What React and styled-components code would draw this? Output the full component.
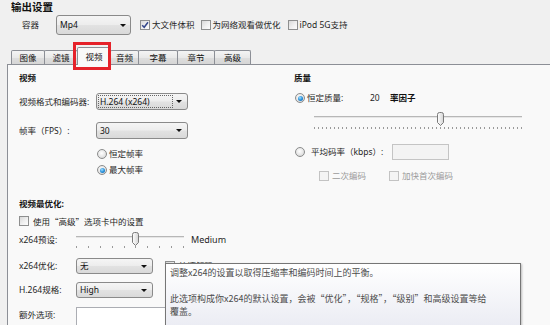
import React from "react";
import styled, { createGlobalStyle } from "styled-components";

const Global = createGlobalStyle`
  html, body { margin: 0; padding: 0; }
  body {
    background: #f0f0f0;
    font-family: "Noto Sans", "Noto Sans CJK SC", sans-serif;
    font-size: 8.5px;
    line-height: 12px;
    color: #1f1f1f;
  }
  * { box-sizing: border-box; }
`;

const Window = styled.div`
  position: relative;
  width: 550px;
  height: 325px;
  overflow: hidden;
  display: flex;
  flex-direction: column;
  background: #f0f0f0;
`;

const Title = styled.div`
  height: 13px;
  padding: 1px 0 0 11px;
  font-size: 10.5px;
  font-weight: 700;
  line-height: 12px;
  color: #111;
`;

const TopRow = styled.div`
  margin-top: 2px;
  height: 20px;
  padding-left: 22px;
  display: flex;
  align-items: center;
`;

const TopLabel = styled.span`
  width: 34px;
  flex: none;
`;

const CheckGroup = styled.div`
  display: flex;
  align-items: center;
  gap: 6px;
  margin-left: ${(p) => p.$ml || 0}px;
`;

const CheckItem = styled.label`
  display: inline-flex;
  align-items: center;
  gap: ${(p) => p.$gap ?? 2}px;
  margin-left: ${(p) => p.$ml || 0}px;
  color: ${(p) => (p.$disabled ? "#9b9b9b" : "inherit")};
  white-space: nowrap;
`;

const CjkText = styled.span`
  font-family: "Noto Sans CJK SC", sans-serif;
`;

const Box = styled.span`
  width: 10px;
  height: 10px;
  flex: none;
  border: 1px solid ${(p) => (p.$disabled ? "#c3c3c3" : "#8e8f8f")};
  background: ${(p) =>
    p.$disabled
      ? "#f4f4f4"
      : "linear-gradient(135deg, #d9d9d9 0%, #f0f0f0 55%, #fdfdfd 100%)"};
  display: inline-flex;
  align-items: center;
  justify-content: center;
`;

const RadioCircle = styled.span`
  width: 10px;
  height: 10px;
  flex: none;
  border-radius: 50%;
  border: 1px solid #8b8c8c;
  background: radial-gradient(circle at 45% 40%, #ffffff 0%, #e6e6e6 55%, #c9c9c9 100%);
  display: inline-flex;
  align-items: center;
  justify-content: center;
  margin-left: ${(p) => p.$ml || 0}px;
  &::after {
    content: "";
    display: ${(p) => (p.$on ? "block" : "none")};
    width: 5px;
    height: 5px;
    border-radius: 50%;
    background: radial-gradient(circle at 40% 35%, #a6e0ff 0%, #2b93dc 50%, #0d5ea8 100%);
  }
`;

const SelectBox = styled.div`
  width: ${(p) => p.$w}px;
  height: ${(p) => p.$h || 17}px;
  flex: none;
  border: 1px solid #8a8a8a;
  border-radius: 3px;
  background: linear-gradient(#f5f5f5 0%, #ededed 48%, #e2e2e2 52%, #d9d9d9 100%);
  display: flex;
  align-items: center;
  padding-left: ${(p) => p.$pl ?? 3}px;
  color: #111;
`;

const SelectText = styled.span`
  flex: 1;
  white-space: nowrap;
`;

const FocusText = styled.span`
  width: 75px;
  height: 13px;
  border: 1px dotted #666;
  padding-left: 1px;
  display: flex;
  align-items: center;
  white-space: nowrap;
`;

const Spacer = styled.span`
  flex: 1;
`;

const Arrow = styled.span`
  flex: none;
  width: 0;
  height: 0;
  border-left: 3px solid transparent;
  border-right: 3px solid transparent;
  border-top: 3px solid #111;
  margin-right: ${(p) => p.$mr ?? 5}px;
`;

const TabBar = styled.div`
  margin-top: 12px;
  height: 17px;
  flex: none;
  padding-left: 11px;
  display: flex;
  align-items: flex-end;
  position: relative;
  z-index: 1;
`;

const Tab = styled.div`
  width: ${(p) => p.$w}px;
  height: ${(p) => (p.$active ? 18 : 14)}px;
  margin-left: ${(p) => (p.$first ? 0 : -1)}px;
  margin-bottom: ${(p) => (p.$active ? -1 : 0)}px;
  border: 1px solid #8c8f96;
  border-bottom: none;
  border-radius: 2px 2px 0 0;
  background: ${(p) =>
    p.$active ? "#f9f9f9" : "linear-gradient(#f4f4f4 0%, #e9e9e9 50%, #dedede 51%, #d6d6d6 100%)"};
  position: relative;
  z-index: ${(p) => (p.$active ? 2 : 1)};
  display: flex;
  align-items: center;
  justify-content: center;
  color: #111;
`;

const Panel = styled.div`
  flex: 1;
  margin-left: 7px;
  border-top: 1px solid #8c8f96;
  border-left: 1px solid #8c8f96;
  background: #f9f9f9;
  padding: 7px 0 0 11px;
`;

const Upper = styled.div`
  display: grid;
  grid-template-columns: 275px 1fr;
  align-items: start;
`;

const Column = styled.div`
  display: flex;
  flex-direction: column;
`;

const Heading = styled.div`
  height: 12px;
  font-weight: 700;
  color: #111;
  margin-top: ${(p) => p.$mt || 0}px;
`;

const FieldRow = styled.div`
  display: flex;
  align-items: center;
  height: ${(p) => p.$h || 17}px;
  margin-top: ${(p) => p.$mt || 0}px;
  padding-left: ${(p) => p.$pl || 0}px;
`;

const FieldLabel = styled.span`
  width: ${(p) => p.$w}px;
  flex: none;
  white-space: nowrap;
  margin-left: ${(p) => p.$ml || 0}px;
  font-weight: ${(p) => (p.$bold ? 700 : 400)};
  color: ${(p) => (p.$bold ? "#111" : "inherit")};
`;

const SliderWrap = styled.div`
  margin-left: ${(p) => p.$ml || 0}px;
  margin-top: ${(p) => p.$mt || 0}px;
  display: flex;
  flex: none;
`;

const Medium = styled.span`
  margin-left: 7px;
  font-size: 9px;
`;

const TextInput = styled.div`
  width: 57px;
  height: 16px;
  flex: none;
  border: 1px solid #c4c4c4;
  background: #f3f3f3;
`;

const ExtraRow = styled.div`
  display: flex;
  align-items: flex-start;
  margin-top: 9px;
`;

const ExtraLabel = styled.span`
  width: 57px;
  flex: none;
  padding-top: 2px;
`;

const TextArea = styled.div`
  width: 320px;
  height: 40px;
  border: 1px solid #abadb3;
  background: #ffffff;
`;

const Tooltip = styled.div`
  position: absolute;
  left: 165px;
  top: 263px;
  width: 356px;
  height: 90px;
  border: 1px solid #767676;
  background: linear-gradient(#ffffff 0%, #eeeff5 60%, #e4e5f0 100%);
  box-shadow: 1px 1px 2px rgba(0, 0, 0, 0.25);
  padding: 2px 4px;
  font-family: "Noto Sans CJK SC", sans-serif;
  font-size: 9px;
  line-height: 13px;
  color: #4c4c4c;
  z-index: 5;
`;

const TipPara = styled.p`
  margin: 0 0 ${(p) => p.$mb || 0}px 0;
  white-space: nowrap;
`;

const Annotation = styled.div`
  position: absolute;
  left: 73px;
  top: 42px;
  width: 38px;
  height: 28px;
  border: 3px solid #e5222a;
  z-index: 6;
`;

function Check({ checked, disabled, label, ml, gap }) {
  return (
    <CheckItem $disabled={disabled} $ml={ml} $gap={gap}>
      <Box $disabled={disabled}>
        {checked && (
          <svg width="8" height="8" viewBox="0 0 8 8">
            <path d="M1.2 4.2 L3.2 6.3 L7 1.2" fill="none" stroke="#34478a" strokeWidth="1.5" />
          </svg>
        )}
      </Box>
      {label}
    </CheckItem>
  );
}

function Select({ w, h, text, focus, pl, mr }) {
  return (
    <SelectBox $w={w} $h={h} $pl={pl}>
      {focus ? (
        <>
          <FocusText>{text}</FocusText>
          <Spacer />
        </>
      ) : (
        <SelectText>{text}</SelectText>
      )}
      <Arrow $mr={mr} />
    </SelectBox>
  );
}

function Slider({ width, height, ticks, index, trackY, tickY, thumbTop, id }) {
  const step = (width - 1) / (ticks - 1);
  const tx = Math.round(index * step);
  const marks = [];
  for (let i = 0; i < ticks; i++) {
    const x = Math.round(i * step) + 0.5;
    marks.push(<line key={i} x1={x} x2={x} y1={tickY} y2={tickY + 2} stroke="#9a9a9a" strokeWidth="1" />);
  }
  return (
    <svg width={width} height={height} viewBox={`0 0 ${width} ${height}`} style={{ display: "block" }}>
      <defs>
        <linearGradient id={id} x1="0" y1="0" x2="1" y2="0">
          <stop offset="0" stopColor="#ffffff" />
          <stop offset="1" stopColor="#d4d4d4" />
        </linearGradient>
      </defs>
      <rect x="0" y={trackY} width={width} height="1" fill="#b7b7b7" />
      <rect x="0" y={trackY + 1} width={width} height="1" fill="#e6e6e6" />
      {marks}
      <path
        d={`M${tx - 3 + 0.5} ${thumbTop + 2.5} q0 -2 2 -2 h2 q2 0 2 2 v8 l-3 3 l-3 -3 z`}
        fill={`url(#${id})`}
        stroke="#7a7a7a"
        strokeWidth="1"
      />
    </svg>
  );
}

const tabs = [
  { t: "图像", w: 34 },
  { t: "滤镜", w: 34 },
  { t: "视频", w: 34, active: true },
  { t: "音频", w: 29 },
  { t: "字幕", w: 40 },
  { t: "章节", w: 38 },
  { t: "高级", w: 37 },
];

export default function App() {
  return (
    <Window>
      <Global />
      <Title>输出设置</Title>
      <TopRow>
        <TopLabel>容器</TopLabel>
        <Select w={75} h={20} text="Mp4" mr={4} />
        <CheckGroup $ml={9}>
          <Check checked label="大文件体积" />
          <Check label="为网络观看做优化" />
          <Check label="iPod 5G支持" ml={1} />
        </CheckGroup>
      </TopRow>
      <TabBar>
        {tabs.map((tb, i) => (
          <Tab key={tb.t} $w={tb.w} $active={tb.active} $first={i === 0}>
            {tb.t}
          </Tab>
        ))}
      </TabBar>
      <Panel>
        <Upper>
          <Column>
            <Heading>视频</Heading>
            <FieldRow $mt={9}>
              <FieldLabel $w={77}>视频格式和编码器:</FieldLabel>
              <Select w={92} text="H.264 (x264)" focus pl={1} />
            </FieldRow>
            <FieldRow $mt={12}>
              <FieldLabel $w={77}>帧率（FPS）:</FieldLabel>
              <Select w={92} text="30" />
            </FieldRow>
            <FieldRow $mt={7} $h={16} $pl={78}>
              <CheckItem>
                <RadioCircle />
                恒定帧率
              </CheckItem>
            </FieldRow>
            <FieldRow $h={16} $pl={78}>
              <CheckItem>
                <RadioCircle $on />
                最大帧率
              </CheckItem>
            </FieldRow>
          </Column>
          <Column>
            <Heading>质量</Heading>
            <FieldRow $mt={8} $h={12}>
              <RadioCircle $on $ml={1} />
              <FieldLabel $w={63} $ml={2}>恒定质量:</FieldLabel>
              <FieldLabel $w={20}>20</FieldLabel>
              <FieldLabel $w={40} $bold>率因子</FieldLabel>
            </FieldRow>
            <SliderWrap $ml={20} $mt={6}>
              <Slider id="rfThumb" width={208} height={22} ticks={52} index={31} trackY={6} tickY={17} thumbTop={2} />
            </SliderWrap>
            <FieldRow $mt={12} $h={16}>
              <RadioCircle $ml={1} />
              <FieldLabel $w={81} $ml={6}>平均码率（kbps）:</FieldLabel>
              <TextInput />
            </FieldRow>
            <FieldRow $mt={10} $h={12} $pl={25}>
              <Check disabled label="二次编码" gap={3} />
              <Check disabled label="加快首次编码" gap={3} ml={23} />
            </FieldRow>
          </Column>
        </Upper>

        <Heading $mt={16}>视频最优化:</Heading>
        <FieldRow $mt={5} $h={12}>
          <Check label={<CjkText>使用“高级”选项卡中的设置</CjkText>} gap={4} />
        </FieldRow>
        <FieldRow $mt={4} $h={18}>
          <FieldLabel $w={57}>x264预设:</FieldLabel>
          <SliderWrap>
            <Slider id="presetThumb" width={108} height={18} ticks={10} index={5} trackY={5} tickY={15} thumbTop={1} />
          </SliderWrap>
          <Medium>Medium</Medium>
        </FieldRow>
        <FieldRow $mt={9} $h={16}>
          <FieldLabel $w={57}>x264优化:</FieldLabel>
          <Select w={77} h={16} text="无" />
          <Check label="快速解码" ml={12} gap={4} />
        </FieldRow>
        <FieldRow $mt={8} $h={16}>
          <FieldLabel $w={57}>H.264规格:</FieldLabel>
          <Select w={77} h={16} text="High" />
        </FieldRow>
        <ExtraRow>
          <ExtraLabel>额外选项:</ExtraLabel>
          <TextArea />
        </ExtraRow>
      </Panel>

      <Tooltip>
        <TipPara $mb={13}>调整x264的设置以取得压缩率和编码时间上的平衡。</TipPara>
        <TipPara>此选项构成你x264的默认设置，会被“优化”，“规格”，“级别”和高级设置等给</TipPara>
        <TipPara>覆盖。</TipPara>
      </Tooltip>
      <Annotation />
    </Window>
  );
}
